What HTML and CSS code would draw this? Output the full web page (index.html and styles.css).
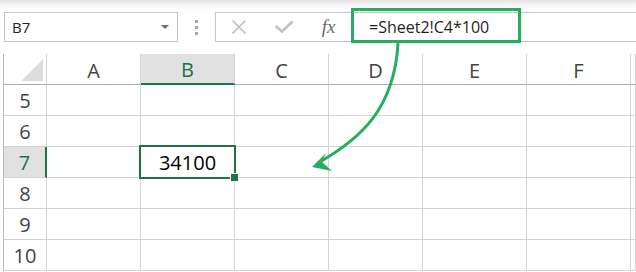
FILE: index.html
```html
<!DOCTYPE html>
<html lang="en">
<head>
  <meta charset="utf-8" />
  <title>Sheet reference formula</title>
  <link rel="stylesheet" href="styles.css">
</head>

<body>
  <!-- Formula bar -->
  <header class="toolbar">
    <div class="namebox">
      <span>B7</span>
      <span class="caret"></span>
    </div>
    <div class="grip"><i></i><i></i><i></i></div>
    <div class="fbar">
      <span class="btn">
        <svg width="16" height="16" viewBox="0 0 16 16"><path d="M1.5 1.5 L14.5 14.5 M14.5 1.5 L1.5 14.5" /></svg>
      </span>
      <span class="btn">
        <svg width="20" height="14" viewBox="0 0 20 14"><path class="tick" d="M1.5 6 L8 11.5 L18.5 1.5" /></svg>
      </span>
      <span class="btn fx">fx</span>
      <div class="finput">=Sheet2!C4*100</div>
    </div>
  </header>

  <!-- callout box round the formula -->
  <div class="callout"></div>

  <!-- Sheet grid -->
  <main class="sheet">
    <div class="hd corner"><span></span></div>
    <div class="hd col">A</div>
    <div class="hd col on">B</div>
    <div class="hd col">C</div>
    <div class="hd col">D</div>
    <div class="hd col">E</div>
    <div class="hd col">F</div>
    <div class="hd col"></div>

    <div class="hd row">5</div>
    <div class="cell"></div><div class="cell"></div><div class="cell"></div><div class="cell"></div><div class="cell"></div><div class="cell"></div><div class="cell"></div>

    <div class="hd row">6</div>
    <div class="cell"></div><div class="cell"></div><div class="cell"></div><div class="cell"></div><div class="cell"></div><div class="cell"></div><div class="cell"></div>

    <div class="hd row on">7</div>
    <div class="cell"></div><div class="cell sel">34100</div><div class="cell"></div><div class="cell"></div><div class="cell"></div><div class="cell"></div><div class="cell"></div>

    <div class="hd row">8</div>
    <div class="cell"></div><div class="cell"></div><div class="cell"></div><div class="cell"></div><div class="cell"></div><div class="cell"></div><div class="cell"></div>

    <div class="hd row">9</div>
    <div class="cell"></div><div class="cell"></div><div class="cell"></div><div class="cell"></div><div class="cell"></div><div class="cell"></div><div class="cell"></div>

    <div class="hd row">10</div>
    <div class="cell"></div><div class="cell"></div><div class="cell"></div><div class="cell"></div><div class="cell"></div><div class="cell"></div><div class="cell"></div>
  </main>

  <!-- arrow from the formula down to the cell -->
  <svg class="arrow" width="636" height="272" viewBox="0 0 636 272">
    <path d="M398 44 C394 108, 362 138, 318 163" />
    <polygon points="312,167 326,153 322,162 332,171" />
  </svg>
</body>
</html>
```

FILE: styles.css
```css
* {
  margin: 0;
  padding: 0;
  box-sizing: border-box;
}

body {
  position: relative;
  width: 636px;
  height: 272px;
  overflow: hidden;
  background: #fff;
  font-family: "Open Sans", "Liberation Sans", sans-serif;
  color: #444;
}

/* Formula bar */
.toolbar {
  display: flex;
  align-items: flex-start;
  height: 54px;
  padding-top: 12px;
  background: linear-gradient(#e4e4e4 0, #f6f6f6 5px, #fff 10px);
}
.namebox {
  display: flex;
  align-items: center;
  width: 174px;
  height: 30px;
  margin-left: 4px;
  padding: 0 8px 0 7px;
  border: 1px solid #c6c6c6;
  background: #fff;
  font-size: 15px;
  color: #222;
}
.caret {
  margin-left: auto;
  width: 0;
  height: 0;
  border-left: 4px solid transparent;
  border-right: 4px solid transparent;
  border-top: 4px solid #6d6d6d;
}
.grip {
  display: flex;
  flex-direction: column;
  align-items: center;
  justify-content: center;
  gap: 3px;
  width: 37px;
  height: 30px;
}
.grip i {
  width: 3px;
  height: 3px;
  background: #a8a8a8;
}
.fbar {
  flex: 1;
  display: flex;
  height: 30px;
  border: 1px solid #c6c6c6;
  border-right: none;
  background: #fff;
}
.btn {
  display: flex;
  align-items: center;
  justify-content: center;
  width: 45px;
  height: 28px;
}
.btn svg path {
  fill: none;
  stroke: #bdbdbd;
  stroke-width: 1.6;
}
.btn svg .tick {
  stroke: #c2c2c2;
  stroke-width: 2.6;
}
.fx {
  font-family: "Liberation Serif", serif;
  font-style: italic;
  font-size: 19px;
  color: #6b6b6b;
}
.finput {
  flex: 1;
  margin-left: 2px;
  padding-left: 15px;
  border-left: 1px solid #c6c6c6;
  font-size: 16px;
  line-height: 28px;
  color: #1f1f1f;
}

.callout {
  position: absolute;
  left: 351px;
  top: 8px;
  width: 170px;
  height: 35px;
  border: 3px solid #26ad62;
}

/* Grid */
.sheet {
  display: grid;
  grid-template-columns: 43px 94px 94px 94px 94px 104px 104px 1fr;
  grid-template-rows: 31px repeat(6, 31px);
  margin-left: 3px;
  border-left: 1px solid #bcbcbc;
}
.hd,
.cell {
  border-right: 1px solid #d4d4d4;
  border-bottom: 1px solid #d4d4d4;
}
.hd {
  display: flex;
  align-items: center;
  justify-content: center;
  font-size: 20px;
  color: #444;
}
.hd.col,
.hd.corner {
  border-bottom-color: #ababab;
  padding-top: 2px;
}
.hd.col.on {
  background: #e1e1e1;
  color: #217346;
  border-bottom: 2px solid #217346;
}
.hd.row {
  padding-top: 1px;
}
.hd.row.on {
  background: #e1e1e1;
  color: #217346;
  border-right: 2px solid #217346;
}
.corner {
  justify-content: flex-end;
  align-items: flex-end;
  padding: 0 3px 3px 0;
}
.corner span {
  width: 0;
  height: 0;
  border-left: 22px solid transparent;
  border-bottom: 22px solid #dcdcdc;
}

.cell.sel {
  position: relative;
  display: flex;
  align-items: center;
  justify-content: center;
  padding-top: 1px;
  font-size: 20px;
  color: #000;
}
.cell.sel::after {
  content: "";
  position: absolute;
  left: -2px;
  top: -2px;
  right: -2px;
  bottom: -2px;
  border: 2px solid #217346;
}
.cell.sel::before {
  content: "";
  position: absolute;
  right: -5px;
  bottom: -5px;
  width: 7px;
  height: 7px;
  background: #217346;
  border: 1px solid #fff;
  z-index: 1;
}

/* Arrow */
.arrow {
  position: absolute;
  left: 0;
  top: 0;
  pointer-events: none;
}
.arrow path {
  fill: none;
  stroke: #26ad62;
  stroke-width: 3;
  stroke-linecap: round;
}
.arrow polygon {
  fill: #26ad62;
}
```
